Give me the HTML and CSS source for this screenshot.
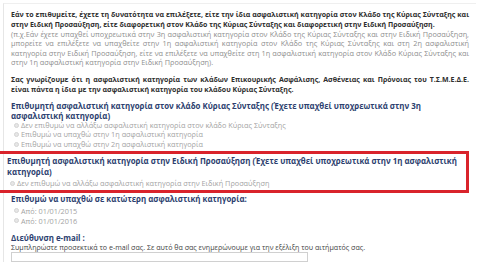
FILE: index.html
```html
<!DOCTYPE html>
<html>
<head>
<meta charset="utf-8">
<link rel="stylesheet" href="styles.css">
</head>
<body>
<div class="page">
  <p class="intro strong">Εάν το επιθυμείτε, έχετε τη δυνατότητα να επιλέξετε, είτε την ίδια ασφαλιστική κατηγορία στον Κλάδο της Κύριας Σύνταξης και στην Ειδική Προσαύξηση, είτε διαφορετική στον Κλάδο της Κύριας Σύνταξης και διαφορετική στην Ειδική Προσαύξηση.</p>
  <p class="intro muted">(π.χ.Εάν έχετε υπαχθεί υποχρεωτικά στην 3η ασφαλιστική κατηγορία στον Κλάδο της Κύριας Σύνταξης και στην Ειδική Προσαύξηση, μπορείτε να επιλέξετε να υπαχθείτε στην 1η ασφαλιστική κατηγορία στον Κλάδο της Κύριας Σύνταξης και στη 2η ασφαλιστική κατηγορία στην Ειδική Προσαύξηση, είτε να επιλέξετε να υπαχθείτε στη 1η ασφαλιστική κατηγορία στον Κλάδο Κύριας Σύνταξης και στην 1η ασφαλιστική κατηγορία στην Ειδική Προσαύξηση).</p>
  <p class="intro strong gap">Σας γνωρίζουμε ότι η ασφαλιστική κατηγορία των κλάδων Επικουρικής Ασφάλισης, Ασθένειας και Πρόνοιας του Τ.Σ.Μ.Ε.Δ.Ε. είναι πάντα η ίδια με την ασφαλιστική κατηγορία του κλάδου Κύριας Σύνταξης.</p>

  <section class="group first">
    <h2 class="title">Επιθυμητή ασφαλιστική κατηγορία στον κλάδο Κύριας Σύνταξης (Έχετε υπαχθεί υποχρεωτικά στην 3η ασφαλιστική κατηγορία)</h2>
    <label class="opt"><span class="radio"></span>Δεν επιθυμώ να αλλάξω ασφαλιστική κατηγορία στον κλάδο Κύριας Σύνταξης</label>
    <label class="opt"><span class="radio"></span>Επιθυμώ να υπαχθώ στην 1η ασφαλιστική κατηγορία</label>
    <label class="opt"><span class="radio"></span>Επιθυμώ να υπαχθώ στην 2η ασφαλιστική κατηγορία</label>
  </section>

  <section class="group highlight">
    <h2 class="title">Επιθυμητή ασφαλιστική κατηγορία στην Ειδική Προσαύξηση (Έχετε υπαχθεί υποχρεωτικά στην 1η ασφαλιστική κατηγορία)</h2>
    <label class="opt"><span class="radio"></span>Δεν επιθυμώ να αλλάξω ασφαλιστική κατηγορία στην Ειδική Προσαύξηση</label>
  </section>

  <section class="group lower">
    <h2 class="title">Επιθυμώ να υπαχθώ σε κατώτερη ασφαλιστική κατηγορία:</h2>
    <div class="opts">
      <label class="opt"><span class="radio"></span>Από: 01/01/2015</label>
      <label class="opt"><span class="radio"></span>Από: 01/01/2016</label>
    </div>
  </section>

  <section class="group email">
    <h2 class="title">Διεύθυνση e-mail :</h2>
    <p class="hint">Συμπληρώστε προσεκτικά το e-mail σας. Σε αυτό θα σας ενημερώνουμε για την εξέλιξη του αιτήματός σας.</p>
    <div class="input"></div>
  </section>
</div>
</body>
</html>
```
FILE: styles.css
```css
* { box-sizing: border-box; }
html, body { margin: 0; padding: 0; background: #fff; }
body {
  font-family: "Open Sans", "Noto Sans", sans-serif;
  width: 480px;
  height: 263px;
  overflow: hidden;
}
.page {
  margin: 3px 4px 0 3px;
  border-left: 1px solid #e6e6e6;
  border-top: 1px solid #efefef;
  padding: 6px 7px 0 0;
}
.intro {
  margin: 0 0 0 7px;
  font-size: 7px;
  line-height: 10px;
  text-align: justify;
}
.strong { font-weight: 700; color: #2e2e2e; }
.muted {
  color: #8e8e8e;
  font-size: 7.3px;
  line-height: 9.4px;
}
.gap { margin-top: 7.6px; line-height: 9.5px; }
.group {
  padding: 0 0 0 7px;
}
.first { margin-top: 6.7px; }
.title {
  margin: 0;
  font-size: 7.9px;
  line-height: 10px;
  font-weight: 700;
  color: #2d3f6f;
}
.opt {
  display: flex;
  align-items: center;
  gap: 2px;
  font-size: 7.3px;
  line-height: 9.3px;
  color: #a3a3a3;
}
.radio {
  width: 5px;
  height: 5px;
  margin-left: 3px;
  border-radius: 50%;
  border: 1px solid #d4d4d4;
  background: #e6e6e6;
  flex: none;
}
.highlight {
  margin: 2px 0 0 -8px;
  border: 3px solid #d9232b;
  padding: 2.5px 4px 1px 8px;
}
.highlight .title { line-height: 11px; }
.highlight .opt { margin-top: 1px; }
.lower { margin-top: 1px; }
.opts { margin-top: 2px; }
.opts .opt { line-height: 10px; }
.email { margin-top: 7px; }
.hint {
  margin: 0;
  font-size: 7.1px;
  line-height: 9px;
  color: #444;
}
.input {
  width: 297px;
  height: 10px;
  border: 1px solid #d0d0d0;
  margin-top: 0.5px;
}
```
